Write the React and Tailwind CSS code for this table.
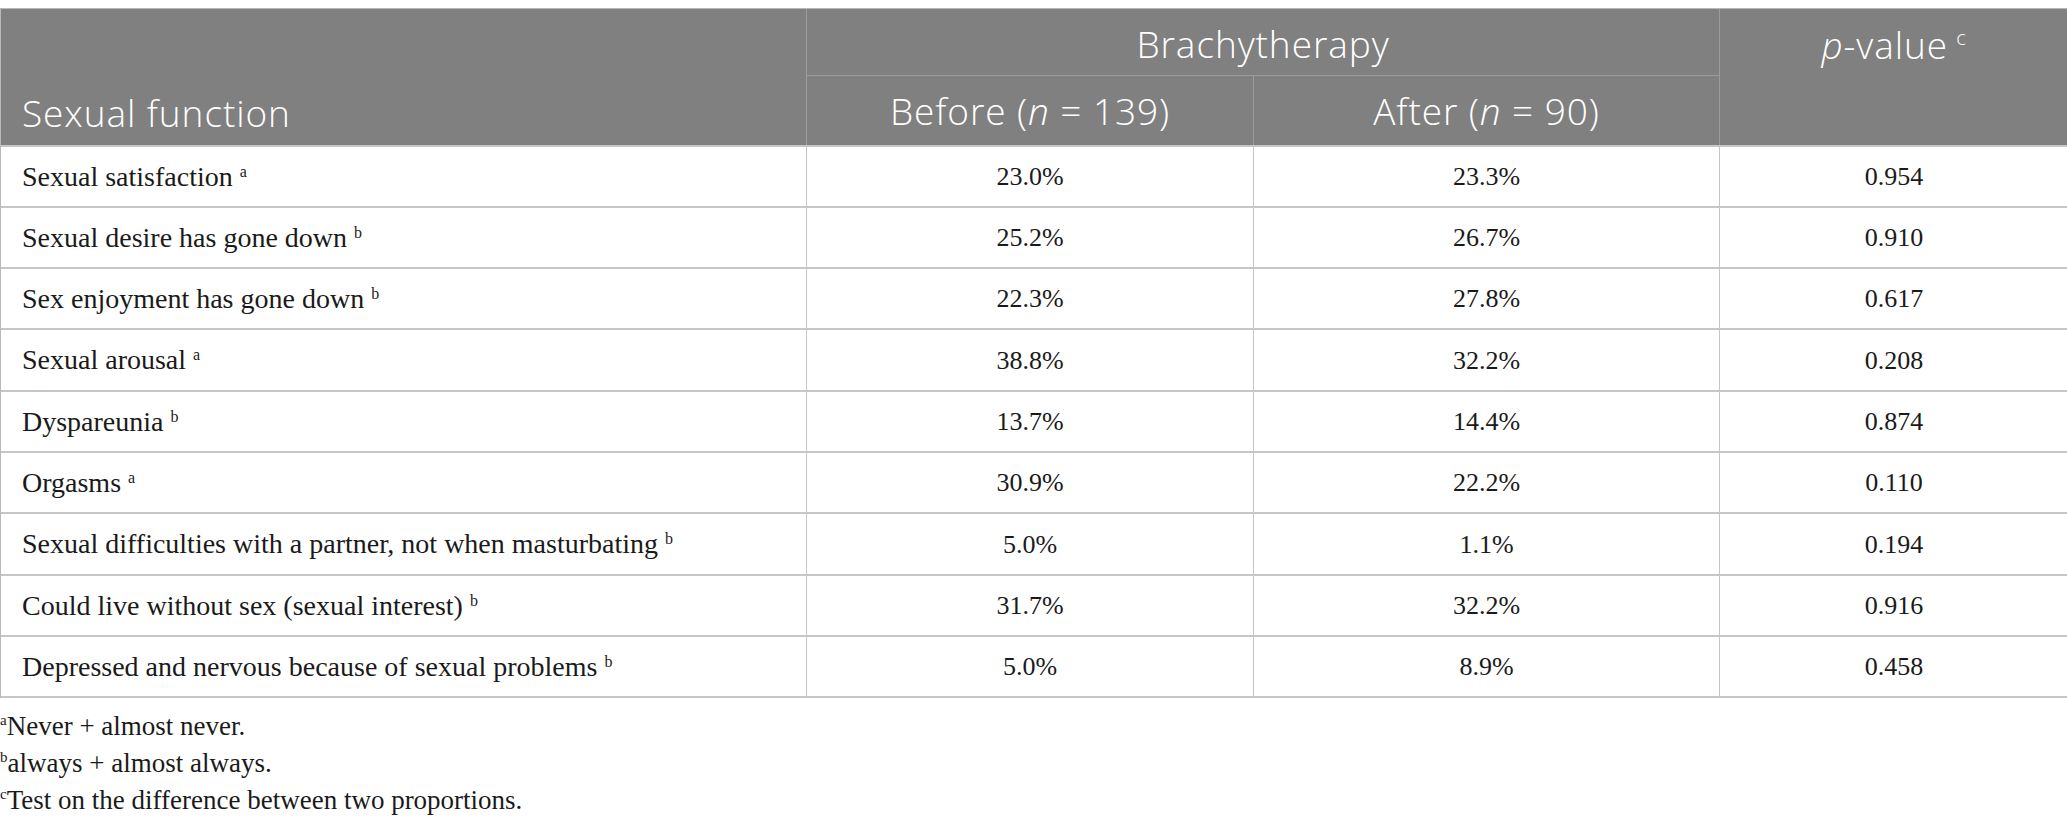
import React from 'react';

const rows = [
  { label: 'Sexual satisfaction', note: 'a', before: '23.0%', after: '23.3%', p: '0.954', h: 'h-[61px]' },
  { label: 'Sexual desire has gone down', note: 'b', before: '25.2%', after: '26.7%', p: '0.910', h: 'h-[61px]' },
  { label: 'Sex enjoyment has gone down', note: 'b', before: '22.3%', after: '27.8%', p: '0.617', h: 'h-[61px]' },
  { label: 'Sexual arousal', note: 'a', before: '38.8%', after: '32.2%', p: '0.208', h: 'h-[62px]' },
  { label: 'Dyspareunia', note: 'b', before: '13.7%', after: '14.4%', p: '0.874', h: 'h-[61px]' },
  { label: 'Orgasms', note: 'a', before: '30.9%', after: '22.2%', p: '0.110', h: 'h-[61px]' },
  { label: 'Sexual difficulties with a partner, not when masturbating', note: 'b', before: '5.0%', after: '1.1%', p: '0.194', h: 'h-[62px]' },
  { label: 'Could live without sex (sexual interest)', note: 'b', before: '31.7%', after: '32.2%', p: '0.916', h: 'h-[61px]' },
  { label: 'Depressed and nervous because of sexual problems', note: 'b', before: '5.0%', after: '8.9%', p: '0.458', h: 'h-[61px]' },
];

const footnotes = [
  { mark: 'a', text: 'Never + almost never.' },
  { mark: 'b', text: 'always + almost always.' },
  { mark: 'c', text: 'Test on the difference between two proportions.' },
];

const sans = "font-['Open_Sans','Noto_Sans',sans-serif] font-light tracking-[0.025em]";
const serif = "font-['Liberation_Serif','Times_New_Roman',serif]";

const App = () => {
  return (
    <div className="w-[2067px] min-h-[829px] bg-white pt-[8px] overflow-hidden">
      {/* Table */}
      <div className="grid grid-cols-[805px_447px_466px_349px] border-t border-l border-[#b9b9b9]">
        {/* Header */}
        <div className={`row-span-2 bg-[#808080] text-white ${sans} text-[37px] flex items-end pl-[21px] pb-[5px]`}>
          Sexual function
        </div>
        <div className={`col-span-2 h-[67px] bg-[#808080] text-white ${sans} text-[37px] border-l border-b border-[#9c9c9c] flex items-center justify-center pt-[3px]`}>
          Brachytherapy
        </div>
        <div className={`row-span-2 bg-[#808080] text-white ${sans} text-[37px] border-l border-[#9c9c9c] flex items-start justify-center pt-[8px]`}>
          <span>
            <i>p</i>-value<sup className="text-[20px] ml-[8px] relative -top-[14px]">c</sup>
          </span>
        </div>
        <div className={`h-[69px] bg-[#808080] text-white ${sans} text-[37px] border-l border-[#9c9c9c] flex items-center justify-center`}>
          <span>Before (<i>n</i> = 139)</span>
        </div>
        <div className={`h-[69px] bg-[#808080] text-white ${sans} text-[37px] border-l border-[#9c9c9c] flex items-center justify-center`}>
          <span>After (<i>n</i> = 90)</span>
        </div>

        {/* Body */}
        {rows.map((r) => (
          <React.Fragment key={r.label}>
            <div className={`${r.h} border-t-2 border-[#c6c6c6] flex items-center pl-[21px] ${serif} text-[28px] text-[#1a1a1a]`}>
              <span>
                {r.label}
                <sup className="text-[16px] ml-[7px] relative -top-[9px]">{r.note}</sup>
              </span>
            </div>
            <div className={`${r.h} border-t-2 border-l border-[#c6c6c6] flex items-center justify-center ${serif} text-[26px] text-[#1a1a1a]`}>
              {r.before}
            </div>
            <div className={`${r.h} border-t-2 border-l border-[#c6c6c6] flex items-center justify-center ${serif} text-[26px] text-[#1a1a1a]`}>
              {r.after}
            </div>
            <div className={`${r.h} border-t-2 border-l border-[#c6c6c6] flex items-center justify-center ${serif} text-[26px] text-[#1a1a1a]`}>
              {r.p}
            </div>
          </React.Fragment>
        ))}
        <div className="col-span-4 border-t-2 border-[#c6c6c6]"></div>
      </div>

      {/* Footnotes */}
      <div className={`mt-[10px] ${serif} text-[27px] leading-[37px] text-[#1a1a1a]`}>
        {footnotes.map((f) => (
          <p key={f.mark}>
            <sup className="text-[15px] relative -top-[10px]">{f.mark}</sup>
            {f.text}
          </p>
        ))}
      </div>
    </div>
  );
};

export default App;
